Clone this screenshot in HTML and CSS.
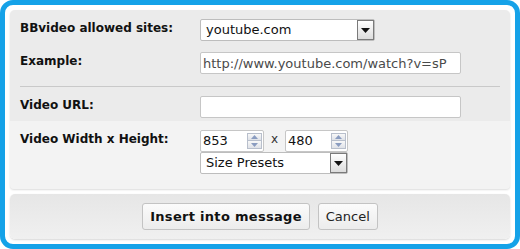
FILE: index.html
```html
<!DOCTYPE html>
<html>
<head>
<meta charset="utf-8">
<link rel="stylesheet" href="styles.css">
</head>
<body>
<div class="frame">
  <div class="panel">
    <div class="main">
      <div class="row r1">
        <label class="lbl">BBvideo allowed sites:</label>
        <div class="select sites">
          <span class="val">youtube.com</span>
          <span class="dd"><svg width="9" height="5" viewBox="0 0 9 5"><path d="M0 0H9L4.5 5Z" fill="#111"/></svg></span>
        </div>
      </div>
      <div class="row r2">
        <label class="lbl">Example:</label>
        <input class="field example" type="text" value="http://www.youtube.com/watch?v=sP" readonly>
      </div>
      <hr class="sep">
      <div class="row r3">
        <label class="lbl">Video URL:</label>
        <input class="field url" type="text" value="">
      </div>
    </div>
    <div class="sizes">
      <div class="row r4">
        <label class="lbl">Video Width x Height:</label>
        <div class="sizectl">
          <div class="dims">
            <div class="num">
              <span class="nval">853</span>
              <span class="spin"><span class="up"><svg width="7" height="4" viewBox="0 0 7 4"><path d="M0 4H7L3.5 0Z" fill="#8a9cc0"/></svg></span><span class="down"><svg width="7" height="4" viewBox="0 0 7 4"><path d="M0 0H7L3.5 4Z" fill="#8a9cc0"/></svg></span></span>
            </div>
            <span class="times">x</span>
            <div class="num">
              <span class="nval">480</span>
              <span class="spin"><span class="up"><svg width="7" height="4" viewBox="0 0 7 4"><path d="M0 4H7L3.5 0Z" fill="#8a9cc0"/></svg></span><span class="down"><svg width="7" height="4" viewBox="0 0 7 4"><path d="M0 0H7L3.5 4Z" fill="#8a9cc0"/></svg></span></span>
            </div>
          </div>
          <div class="select presets">
            <span class="val">Size Presets</span>
            <span class="dd"><svg width="9" height="5" viewBox="0 0 9 5"><path d="M0 0H9L4.5 5Z" fill="#111"/></svg></span>
          </div>
        </div>
      </div>
    </div>
  </div>
  <div class="bar">
    <button class="btn primary">Insert into message</button>
    <button class="btn">Cancel</button>
  </div>
</div>
</body>
</html>
```
FILE: styles.css
```css
html, body {
  margin: 0;
  padding: 0;
  background: #ffffff;
}
body {
  font-family: "DejaVu Sans", Verdana, sans-serif;
  font-size: 13px;
  color: #111;
}
.frame {
  box-sizing: border-box;
  width: 520px;
  height: 249px;
  border: 5px solid #15a2e8;
  border-radius: 13px;
  padding: 5px;
  background: #fff;
  display: flex;
  flex-direction: column;
}
.panel {
  background: #ebebeb;
  border-radius: 5px 5px 4px 4px;
  box-shadow: 0 1px 2px rgba(0,0,0,0.14);
}
.main {
  padding: 9px 10px 3px 10px;
}
.row {
  display: grid;
  grid-template-columns: 180px 1fr;
  align-items: start;
}
.lbl {
  font-weight: bold;
  font-size: 12px;
  line-height: 15px;
  color: #111;
  padding-top: 2px;
}
.r2 { margin-top: 11px; }
.r2 .lbl { padding-top: 2px; }
.sep {
  border: 0;
  border-top: 1px solid #c9c9c9;
  margin: 12px 0 9px 0;
  height: 0;
}
.select {
  box-sizing: border-box;
  height: 22px;
  border: 1px solid #bdbdbd;
  border-radius: 2px;
  background: #fff;
  display: flex;
  align-items: center;
  justify-content: space-between;
  padding: 0 0 0 5px;
}
.select .val {
  line-height: 20px;
}
.select .dd {
  box-sizing: border-box;
  width: 17px;
  height: 20px;
  border: 1px solid #7a7a7a;
  background: linear-gradient(#ffffff, #dcdcdc);
  display: flex;
  align-items: center;
  justify-content: center;
}
.sites { width: 175px; }
.field {
  box-sizing: border-box;
  height: 22px;
  border: 1px solid #c6c6c6;
  border-radius: 2px;
  background: #fff;
  font-family: "DejaVu Sans", Verdana, sans-serif;
  font-size: 13px;
  padding: 0 2px;
  margin: 0;
  outline: none;
}
.example { width: 261px; color: #4a4a4a; }
.url { width: 261px; height: 22px; }
.sizes {
  background: #f3f3f3;
  border-radius: 0 0 4px 4px;
  padding: 9px 10px 15px 10px;
}
.r4 .lbl { padding-top: 2px; }
.sizectl {
  display: flex;
  flex-direction: column;
  width: 148px;
}
.dims {
  display: flex;
  align-items: center;
}
.num {
  box-sizing: border-box;
  width: 64px;
  height: 22px;
  border: 1px solid #c6c6c6;
  border-radius: 2px;
  background: #fff;
  display: flex;
  align-items: center;
  justify-content: space-between;
  padding: 0 1px 0 2px;
}
.nval { line-height: 20px; }
.spin {
  display: flex;
  flex-direction: column;
  width: 15px;
  height: 16px;
}
.spin .up, .spin .down {
  box-sizing: border-box;
  height: 8px;
  border: 1px solid #b8bfcc;
  background: linear-gradient(#f8f8f8, #dfe2e8);
  display: flex;
  align-items: center;
  justify-content: center;
}
.spin .down { border-top: 0; }
.times {
  width: 21px;
  text-align: center;
  font-size: 12px;
  color: #333;
  position: relative;
  top: -2px;
}
.dims .num + .times + .num { width: 63px; }
.presets {
  width: 148px;
  height: 22px;
}
.bar {
  margin-top: 5px;
  height: 46px;
  box-sizing: border-box;
  border-radius: 5px;
  background: linear-gradient(#e6e6e6, #f0f0f0);
  box-shadow: 0 1px 2px rgba(0,0,0,0.16);
  display: flex;
  justify-content: center;
  align-items: flex-start;
  gap: 8px;
  padding-top: 9px;
}
.btn {
  box-sizing: border-box;
  height: 27px;
  border: 1px solid #c3c3c3;
  border-radius: 3px;
  background: linear-gradient(#fbfbfb, #ececec);
  font-family: "DejaVu Sans", Verdana, sans-serif;
  font-size: 13px;
  color: #222;
  padding: 0 7px;
  margin: 0;
}
.primary {
  font-weight: bold;
  letter-spacing: 0.3px;
  color: #111;
}
```
